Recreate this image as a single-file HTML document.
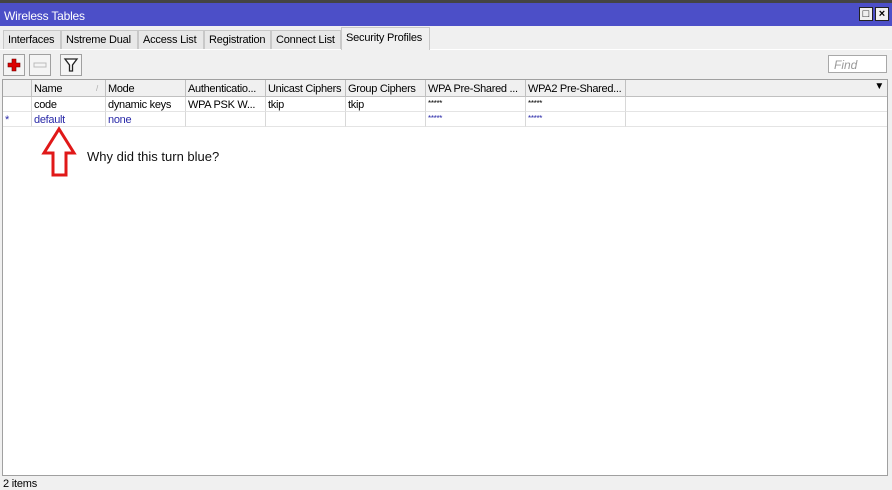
<!DOCTYPE html>
<html><head><style>
*{margin:0;padding:0;box-sizing:border-box}
body{width:892px;height:490px;background:#f0f0f0;font-family:"Liberation Sans",sans-serif;font-size:11px;color:#000;position:relative;overflow:hidden}
.abs{position:absolute}
.title{left:0;top:0;width:892px;height:26px;background:#4c4fc8;border-top:3px solid #444;color:#fff;font-size:12px;padding:6px 0 0 4px;letter-spacing:-0.2px}
.wb{top:7px;width:14px;height:14px;background:#f0f0f0;border:1px solid #222;color:#000;font-size:11px;line-height:12px;text-align:center;font-weight:bold}
.tab{top:30px;height:19px;border:1px solid #c8c8c8;border-bottom:none;background:#e8e8e8;padding:3px 0 0 4px;font-size:11px;letter-spacing:-0.2px;white-space:nowrap}
.btn{top:54px;width:22px;height:22px;border:1px solid #a0a0a0;background:#f4f4f4}
.grid{left:2px;top:79px;width:886px;height:397px;background:#fff;border:1px solid #a0a0a0}
.c{position:absolute;height:15px;border-right:1px solid #d8d8d8;padding:2px 0 0 2px;white-space:nowrap;overflow:hidden;font-size:11px;letter-spacing:-0.3px}
.h{top:0;height:17px;background:#f0f0f0;border-right:1px solid #c0c0c0;border-bottom:1px solid #c0c0c0;padding-top:3px}
.r1{top:17px;border-bottom:1px solid #e4e4e4}
.r2{top:32px;border-bottom:1px solid #e4e4e4;color:#2a2aa8}
</style></head><body>
<div class="abs title">Wireless Tables</div>
<div class="abs wb" style="left:859px">□</div>
<div class="abs wb" style="left:875px">×</div>
<div class="abs" style="left:0;top:49px;width:892px;height:1px;background:#fff"></div>
<div class="abs tab" style="left:3px;width:58px">Interfaces</div>
<div class="abs tab" style="left:61px;width:77px">Nstreme Dual</div>
<div class="abs tab" style="left:138px;width:66px">Access List</div>
<div class="abs tab" style="left:204px;width:67px">Registration</div>
<div class="abs tab" style="left:271px;width:70px">Connect List</div>
<div class="abs tab" style="left:341px;top:27px;height:23px;width:89px;background:#f0f0f0;padding-top:4px">Security Profiles</div>
<div class="abs btn" style="left:3px"><svg width="20" height="20"><path d="M8 4h4v4h4v4h-4v4h-4v-4h-4v-4h4z" fill="#d00" stroke="#600" stroke-width=".6"/></svg></div>
<div class="abs btn" style="left:29px"><svg width="20" height="20"><rect x="4" y="8" width="12" height="4" fill="#f4f4f4" stroke="#bbb"/></svg></div>
<div class="abs btn" style="left:60px"><svg width="20" height="20"><path d="M4 4h12l-4.5 6v6h-3v-6z" fill="#fff" stroke="#222" stroke-width="1.3"/></svg></div>
<div class="abs" style="left:828px;top:55px;width:59px;height:18px;background:#fff;border:1px solid #a8a8a8;color:#999;font-style:italic;padding:2px 0 0 5px;font-size:12px">Find</div>
<div class="abs grid">
<div class="c h" style="left:0;width:29px"></div>
<div class="c h" style="left:29px;width:74px">Name<span style="position:absolute;left:64px;top:4px;color:#aaa;font-size:8px">/</span></div>
<div class="c h" style="left:103px;width:80px">Mode</div>
<div class="c h" style="left:183px;width:80px">Authenticatio...</div>
<div class="c h" style="left:263px;width:80px">Unicast Ciphers</div>
<div class="c h" style="left:343px;width:80px">Group Ciphers</div>
<div class="c h" style="left:423px;width:100px">WPA Pre-Shared ...</div>
<div class="c h" style="left:523px;width:100px">WPA2 Pre-Shared...</div>
<div class="c h" style="left:623px;width:261px;border-right:none"><span style="position:absolute;right:3px;top:1px;font-size:10px">▼</span></div>
<div class="c r1" style="left:0;width:29px"></div>
<div class="c r1" style="left:29px;width:74px">code</div>
<div class="c r1" style="left:103px;width:80px">dynamic keys</div>
<div class="c r1" style="left:183px;width:80px">WPA PSK W...</div>
<div class="c r1" style="left:263px;width:80px">tkip</div>
<div class="c r1" style="left:343px;width:80px">tkip</div>
<div class="c r1" style="left:423px;width:100px;font-size:8px">*****</div>
<div class="c r1" style="left:523px;width:100px;font-size:8px">*****</div>
<div class="c r1" style="left:623px;width:261px;border-right:none"></div>
<div class="c r2" style="left:0;width:29px">*</div>
<div class="c r2" style="left:29px;width:74px">default</div>
<div class="c r2" style="left:103px;width:80px">none</div>
<div class="c r2" style="left:183px;width:80px"></div>
<div class="c r2" style="left:263px;width:80px"></div>
<div class="c r2" style="left:343px;width:80px"></div>
<div class="c r2" style="left:423px;width:100px;font-size:8px">*****</div>
<div class="c r2" style="left:523px;width:100px;font-size:8px">*****</div>
<div class="c r2" style="left:623px;width:261px;border-right:none"></div>
</div>
<svg class="abs" style="left:0;top:0" width="892" height="490"><path d="M59 129L44 153H53V175H66V153H74Z" fill="none" stroke="#e01818" stroke-width="3" stroke-linejoin="miter"/></svg>
<div class="abs" style="left:87px;top:149px;font-size:13px;color:#111">Why did this turn blue?</div>
<div class="abs" style="left:3px;top:478px;font-size:11px;letter-spacing:-0.2px">2 items</div>
</body></html>
